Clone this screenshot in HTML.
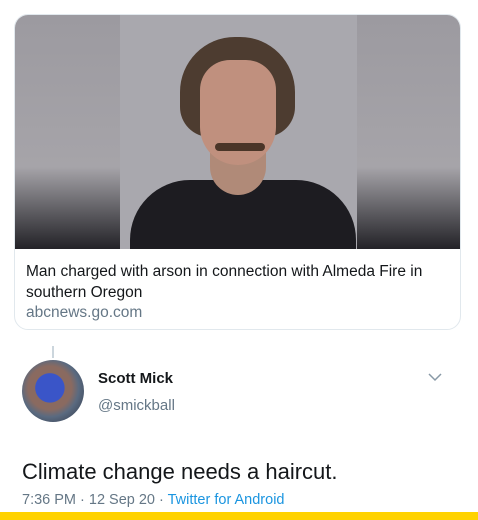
<!DOCTYPE html><html><head><style>
body{margin:0;width:478px;height:520px;background:#fff;font-family:"Liberation Sans",sans-serif;position:relative;overflow:hidden}
.a{position:absolute}
</style></head><body>
<div class="a" style="left:14px;top:14px;width:447px;height:316px;border:1px solid #e1e8ed;border-radius:14px;overflow:hidden;box-sizing:border-box">
 <div class="a" style="left:0;top:0;width:447px;height:234px;background:linear-gradient(#9c9aa0 0%,#a6a4a9 65%,#5a595e 85%,#232227 100%)"></div>
 <div class="a" style="left:105px;top:0;width:237px;height:234px;background:#a9a8ae;overflow:hidden">
  <div class="a" style="left:10px;top:165px;width:226px;height:80px;background:#1d1c21;border-radius:60px 60px 0 0"></div>
  <div class="a" style="left:90px;top:130px;width:56px;height:50px;background:#b08a78;border-radius:0 0 28px 28px"></div>
  <div class="a" style="left:60px;top:22px;width:115px;height:100px;background:#4d3c30;border-radius:55px 55px 30px 30px"></div>
  <div class="a" style="left:80px;top:45px;width:76px;height:105px;background:#c0907e;border-radius:30px 30px 38px 38px"></div>
  <div class="a" style="left:95px;top:128px;width:50px;height:8px;background:#4a3528;border-radius:4px"></div>
 </div>
 <div class="a" style="left:11px;top:246px;font-size:15.5px;color:#14171a;line-height:21px;width:420px">Man charged with arson in connection with Almeda Fire in southern Oregon</div>
 <div class="a" style="left:11px;top:289px;font-size:15.5px;color:#657786">abcnews.go.com</div>
</div>
<div class="a" style="left:52px;top:346px;width:2px;height:12px;background:#ccd6dd"></div>
<div class="a" style="left:22px;top:360px;width:62px;height:62px;border-radius:50%;background:radial-gradient(circle at 45% 45%,#3a55c8 0 30%,#8a6a60 31% 45%,#5a6a80 60%,#2a3040 100%)"></div>
<div class="a" style="left:98px;top:370px;font-size:15px;font-weight:bold;color:#14171a">Scott Mick</div>
<div class="a" style="left:98px;top:397px;font-size:15px;color:#657786">@smickball</div>
<svg class="a" style="left:428px;top:372px" width="14" height="10"><path d="M1 2 L7 8 L13 2" stroke="#8899a6" stroke-width="1.5" fill="none"/></svg>
<div class="a" style="left:22px;top:459px;font-size:22px;color:#14171a">Climate change needs a haircut.</div>
<div class="a" style="left:22px;top:492px;font-size:14.5px;color:#657786">7:36 PM · 12 Sep 20 · <span style="color:#1b95e0">Twitter for Android</span></div>
<div class="a" style="left:0;top:512px;width:478px;height:8px;background:#ffd200"></div>
</body></html>
